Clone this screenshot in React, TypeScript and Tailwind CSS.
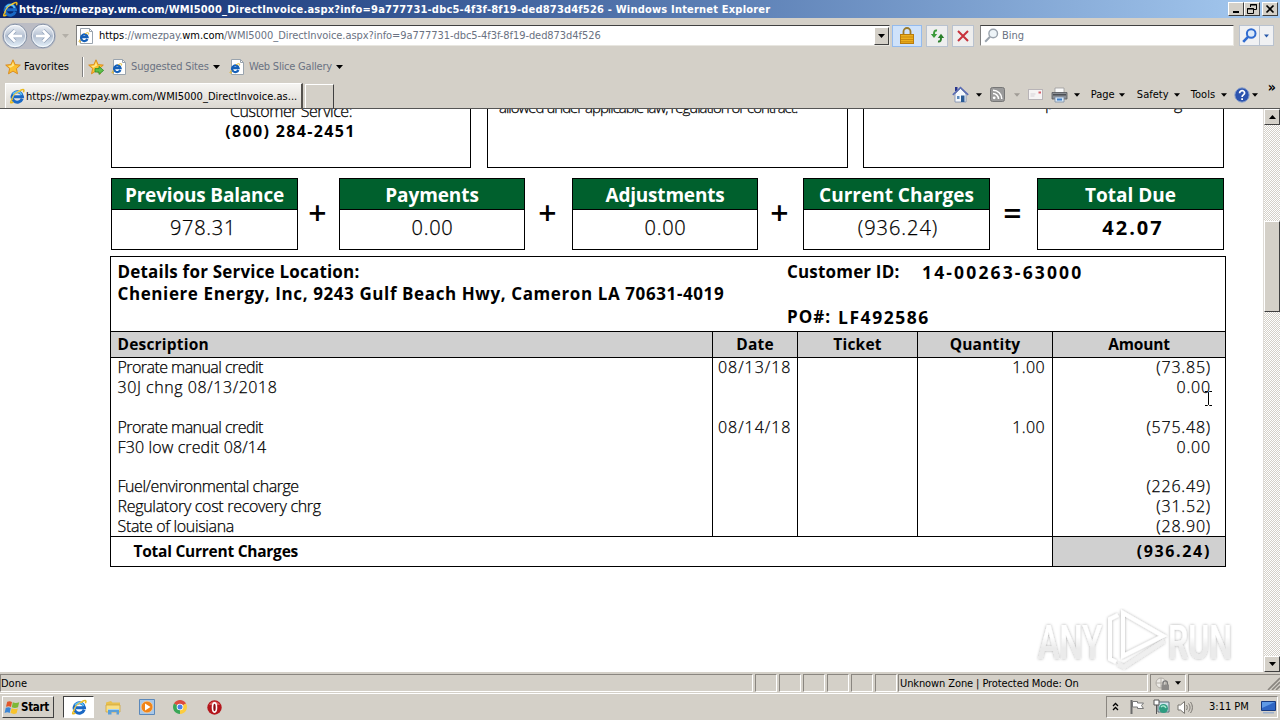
import { ReactNode } from "react";

const URL_HOST = "wm.com";

interface LineItem {
  description: string;
  tracking?: string;
  date?: string;
  quantity?: string;
  amount?: string;
}

const lineItems: LineItem[] = [
  { description: "Prorate manual credit", tracking: "tracking-[-0.55px]", date: "08/13/18", quantity: "1.00", amount: "(73.85)" },
  { description: "30J chng 08/13/2018", tracking: "tracking-[0.56px]", amount: "0.00" },
  { description: "" },
  { description: "Prorate manual credit", tracking: "tracking-[-0.55px]", date: "08/14/18", quantity: "1.00", amount: "(575.48)" },
  { description: "F30 low credit 08/14", tracking: "tracking-[0.12px]", amount: "0.00" },
  { description: "" },
  { description: "Fuel/environmental charge", tracking: "tracking-[-0.45px]", amount: "(226.49)" },
  { description: "Regulatory cost recovery chrg", tracking: "tracking-[-0.3px]", amount: "(31.52)" },
  { description: "State of louisiana", tracking: "tracking-[-0.35px]", amount: "(28.90)" },
];

const quickLaunch = [<ExplorerIcon />, <MediaIcon />, <ChromeIcon />, <OperaIcon />];

/* ---------- Icons ---------- */

function IeIcon({ size = 16 }: { size?: number }) {
  return (
    <svg width={size} height={size} viewBox="0 0 16 16" fill="none" className="shrink-0">
      <path d="M13.2 10.8A5.2 5.2 0 1 1 13.5 8.7H5" stroke="#1a68c4" strokeWidth="3" />
      <path d="M12.6 7A4.6 4.6 0 0 0 4 6.4" stroke="#5cc0f6" strokeWidth="1.6" />
      <path d="M3.6 10.6C.6 14.6 1.2 15.8 4.4 14M9.8 3.4C13.8.6 16 .8 14.4 4.2" stroke="#e9b91e" strokeWidth="1.5" />
      <path d="M2.6 11.4C4 7.4 7.4 4.2 11.6 2.6" stroke="#f2cf45" strokeWidth="1.1" />
    </svg>
  );
}

function IePageIcon() {
  return (
    <svg width="16" height="16" viewBox="0 0 16 16" fill="none" className="shrink-0">
      <path d="M2.5.5h9l3 3v12h-12z" fill="#fff" stroke="#9aa4ae" />
      <path d="M11.5.5v3h3" stroke="#9aa4ae" />
      <path d="M9.4 11A3.3 3.3 0 1 1 9.6 9.2H4.2" stroke="#1560b8" strokeWidth="2.2" />
      <path d="M2.4 11.2C.2 14 .8 14.8 3 13.4M7 5.8c3-1.8 4.4-1.4 3.2.8" stroke="#e0b42a" />
    </svg>
  );
}

function Star({ arrow }: { arrow?: boolean }) {
  return (
    <svg width="16" height="16" viewBox="0 0 16 16" className="shrink-0">
      <path d="M8 .8l2.1 4.8 5.2.5-3.9 3.5 1.1 5.2L8 12.1l-4.5 2.7 1.1-5.2L.7 6.1l5.2-.5z" fill="#fbc02f" stroke="#d98616" strokeWidth=".9" />
      <path d="M8 3l1.2 3.4-3.7 2.3L3 7l3.5-.6z" fill="#ffe68a" />
      {arrow && <path d="M7 9.6h4V7.4l4.6 4-4.6 4v-2.4H7z" fill="#5fc04a" stroke="#2b8a26" strokeWidth=".8" />}
    </svg>
  );
}

function Caret({ className = "text-black" }: { className?: string }) {
  return (
    <svg width="7" height="4" viewBox="0 0 7 4" className={"shrink-0 " + className}>
      <path d="M0 0h7L3.5 4z" fill="currentColor" />
    </svg>
  );
}

function NavCircle({ back }: { back?: boolean }) {
  const arrow = back ? "M20 13H8M13 7.5L7.5 13l5.5 5.5" : "M6 13h12M13 7.5l5.5 5.5-5.5 5.5";
  return (
    <svg width="26" height="26" viewBox="0 0 26 26" fill="none" className="shrink-0">
      <defs>
        <linearGradient id="nav" x1="0" y1="0" x2="0" y2="1">
          <stop offset="0" stopColor="#f3f6fa" />
          <stop offset=".5" stopColor="#b4c0d2" />
          <stop offset="1" stopColor="#e6f2fb" />
        </linearGradient>
      </defs>
      <circle cx="13" cy="13" r="11.8" fill="url(#nav)" stroke="#8793a6" />
      <circle cx="13" cy="13" r="10.6" stroke="#fff" strokeOpacity=".7" />
      <path d={arrow} stroke="#8fa0b8" strokeWidth="4.2" />
      <path d={arrow} stroke="#fff" strokeWidth="2.8" />
    </svg>
  );
}

function LockIcon() {
  return (
    <svg width="14" height="17" viewBox="0 0 14 17" fill="none">
      <path d="M3.5 8V4.5a3.5 3.5 0 0 1 7 0V8" stroke="#9a7a2c" strokeWidth="1.8" />
      <rect x=".5" y="7.5" width="13" height="9" fill="#eeb01c" stroke="#b97c0c" />
      <path d="M1 10h12M1 12.5h12M1 14.8h12" stroke="#c98a10" />
    </svg>
  );
}

function RefreshIcon() {
  return (
    <svg width="15" height="14" viewBox="0 0 15 14" fill="none">
      <path d="M7 1.5C4.5 1.2 4 2.5 4 5.5" stroke="#3c9a3a" strokeWidth="2" />
      <path d="M.8 5H7.2L4 9z" fill="#3c9a3a" />
      <path d="M8 12.5c2.5.3 3-1 3-4" stroke="#2a7f2a" strokeWidth="2" />
      <path d="M7.8 9h6.4L11 4.8z" fill="#2a7f2a" />
    </svg>
  );
}

function SearchGlyph({ color, bold }: { color: string; bold?: boolean }) {
  return (
    <svg width="15" height="15" viewBox="0 0 15 15" fill="none" className="shrink-0">
      <circle cx="9.2" cy="5.5" r="4.3" fill={bold ? "#dceafa" : "#eef4f8"} stroke={color} strokeWidth={bold ? 2 : 1.4} />
      <path d="M6 8.8L1.2 13.8" stroke={color} strokeWidth={bold ? 2.6 : 2} />
    </svg>
  );
}

function HomeIcon() {
  return (
    <svg width="17" height="17" viewBox="0 0 17 17">
      <path d="M3 1h2.5v4H3z" fill="#28348c" />
      <path d="M3 8l5.5-5.5L14 8v8H3z" fill="#f4f7fb" stroke="#7a8cae" strokeWidth=".8" />
      <path d="M.8 8.8L8.5 1.5l7.7 7.3" fill="none" stroke="#5a6cb4" strokeWidth="1.6" />
      <path d="M5 10h2.5v3H5z" fill="#5a88bc" />
      <path d="M9 9.5h3.5V16H9z" fill="#2a5a94" />
    </svg>
  );
}

function RssIcon() {
  return (
    <svg width="15" height="15" viewBox="0 0 15 15" fill="none">
      <rect x=".5" y=".5" width="14" height="14" rx="2" fill="#9a9a9a" stroke="#777" />
      <circle cx="4.2" cy="10.8" r="1.4" fill="#fff" />
      <path d="M3 6.5a5.5 5.5 0 0 1 5.5 5.5M3 3.2A8.8 8.8 0 0 1 11.8 12" stroke="#fff" strokeWidth="1.5" />
    </svg>
  );
}

function MailIcon() {
  return (
    <svg width="15" height="11" viewBox="0 0 15 11" fill="none">
      <rect x=".5" y=".5" width="14" height="10" fill="#f6f4f4" stroke="#b8b4b7" />
      <path d="M10.5 2.5H13v2h-2.5z" fill="#d8606a" />
      <path d="M2.5 5h5M2.5 7h4" stroke="#d5d1d6" />
    </svg>
  );
}

function PrinterIcon() {
  return (
    <svg width="17" height="16" viewBox="0 0 17 16">
      <path d="M4 1h9v5H4z" fill="#fafafa" stroke="#9a9a9a" strokeWidth=".8" />
      <path d="M1 5.5h15V12H1z" fill="#8b8f94" stroke="#55585c" strokeWidth=".8" />
      <path d="M2 7h13v1.5H2z" fill="#4c4f54" />
      <path d="M4 10h9v5H4z" fill="#d5e6f6" stroke="#7d8ea2" strokeWidth=".8" />
      <path d="M6 11.5h5v2H6z" fill="#3f7fc8" />
    </svg>
  );
}

function HelpIcon() {
  return (
    <svg width="16" height="16" viewBox="0 0 16 16" fill="none">
      <circle cx="8" cy="8" r="7.2" fill="#2c53ae" stroke="#8fa4cc" />
      <path d="M5.6 6.2C5.6 2.8 10.6 3 10.6 6c0 2-2.5 1.9-2.5 4" stroke="#fff" strokeWidth="1.7" />
      <path d="M7.2 11.3H9V13H7.2z" fill="#fff" />
    </svg>
  );
}

function WindowsFlag() {
  return (
    <svg width="16" height="15" viewBox="0 0 16 15" className="shrink-0">
      <path d="M3.2 1.8C5 .8 6.5 1 8 2L7 7C5.4 6 4 6 2 6.8z" fill="#e2572b" />
      <path d="M8.8 2.3c2 1 4 .9 6.4 0L14 7.2c-2 .9-4.2.9-6.2 0z" fill="#7db837" />
      <path d="M1.8 7.8c2-.8 3.4-.7 5 .2l-1.1 5C4.2 12 2.5 12 .6 12.9z" fill="#3b86d6" />
      <path d="M7.6 8.3c2 .9 4 .9 6.2.1l-1.2 4.9c-2 .9-4 .8-6.1-.2z" fill="#f8c32c" />
    </svg>
  );
}

function ExplorerIcon() {
  return (
    <svg width="16" height="15" viewBox="0 0 16 15">
      <path d="M1 2.5L6 1l1.5 1.5H15V6H1z" fill="#e8c04e" />
      <path d="M1 5h14v7H1z" fill="#f8df85" stroke="#cfa53e" strokeWidth=".8" />
      <path d="M3 9h11v5.5h-2.5V12h-5v2.5H3z" fill="#5a9fd8" />
      <path d="M3 9h11v1H3z" fill="#a8d2f0" />
    </svg>
  );
}

function MediaIcon() {
  return (
    <svg width="16" height="16" viewBox="0 0 16 16">
      <path d="M.5.5h15v15H.5z" fill="#a9c8e8" stroke="#5b88ba" />
      <circle cx="8" cy="8" r="5.8" fill="#f08418" stroke="#fbc890" strokeWidth=".7" />
      <path d="M6 4.5L11.5 8 6 11.5z" fill="#fff" />
    </svg>
  );
}

function ChromeIcon() {
  return (
    <svg width="14" height="14" viewBox="0 0 14 14">
      <path d="M7 7L.94 3.5A7 7 0 0 1 13.06 3.5z" fill="#dd4b3e" />
      <path d="M7 7L13.06 3.5A7 7 0 0 1 7 14z" fill="#fccd3f" />
      <path d="M7 7v7A7 7 0 0 1 .94 3.5z" fill="#3aa757" />
      <circle cx="7" cy="7" r="3.3" fill="#fff" />
      <circle cx="7" cy="7" r="2.5" fill="#4a80e8" />
    </svg>
  );
}

function OperaIcon() {
  return (
    <svg width="15" height="15" viewBox="0 0 15 15">
      <circle cx="7.5" cy="7.5" r="7.2" fill="#b4161c" />
      <path d="M2 5a6 6 0 0 1 11 0z" fill="#dc5a58" />
      <ellipse cx="7.5" cy="7.5" rx="2" ry="4.6" fill="#8c0c12" stroke="#fff" strokeWidth="1.6" />
    </svg>
  );
}

function Watermark() {
  return (
    <svg width="200" height="64" viewBox="0 0 200 64" fill="none">
      <defs>
        <linearGradient id="wm" x1="0" y1="0" x2="0" y2="1">
          <stop offset=".4" stopColor="#fff" />
          <stop offset=".6" stopColor="#ebebeb" />
        </linearGradient>
        <filter id="soft" x="-10%" y="-10%" width="120%" height="130%">
          <feDropShadow dx="0" dy="0" stdDeviation="1.5" floodColor="#000" floodOpacity=".34" />
        </filter>
      </defs>
      <g filter="url(#soft)" fill="url(#wm)" className="font-['Roboto','Liberation_Sans',sans-serif] text-[48px] font-medium">
        <text x="2" y="51" textLength="64" lengthAdjust="spacingAndGlyphs">ANY</text>
        <text x="132" y="51" textLength="64" lengthAdjust="spacingAndGlyphs">RUN</text>
      </g>
      <g filter="url(#soft)" stroke="#fff" strokeWidth="4">
        <path d="M82 7L74 11v40l6 3" />
        <path d="M87 5v43L127 28z" />
        <path d="M128 33L88 59l-6-3" stroke="#efefef" />
      </g>
    </svg>
  );
}

/* ---------- Browser window ---------- */

function WindowButton({ children }: { children: ReactNode }) {
  return (
    <button className="w-4 h-[14px] bg-[#d4d0c8] border border-t-white border-l-white border-r-[#404040] border-b-[#404040] flex items-center justify-center">
      {children}
    </button>
  );
}

function TitleBar() {
  return (
    <div className="h-[18px] flex items-center justify-between px-0.5 bg-linear-to-r from-[#0a246a] to-[#a6caf0]">
      <div className="flex items-center gap-px">
        <IeIcon />
        <span className="text-white font-bold tracking-[0.2px] pt-px">
          https://wmezpay.wm.com/WMI5000_DirectInvoice.aspx?info=9a777731-dbc5-4f3f-8f19-ded873d4f526 - Windows Internet Explorer
        </span>
      </div>
      <div className="flex">
        <WindowButton>
          <svg width="10" height="10"><path d="M2 7h6v2H2z" /></svg>
        </WindowButton>
        <WindowButton>
          <svg width="10" height="10" fill="none" stroke="#000">
            <path d="M3.5 3V.5h6v5H7M3 1h7M.5 4.5h6v5h-6zM0 5h7" />
          </svg>
        </WindowButton>
        <span className="w-[2px]" />
        <WindowButton>
          <svg width="10" height="10" fill="none" stroke="#000" strokeWidth="1.7"><path d="M1.5 1.5l7 7M8.5 1.5l-7 7" /></svg>
        </WindowButton>
      </div>
    </div>
  );
}

function NavBar() {
  return (
    <div className="h-[34px] flex items-center pl-0.5 pt-px">
      <div className="flex gap-[2px] rounded-full bg-[#bbbcc4]">
        <NavCircle back />
        <NavCircle />
      </div>
      <Caret className="text-[#b3afa8] ml-[6px]" />
      <div className="ml-[7px] w-[814px] h-[21px] bg-white border border-[#808080] border-r-[#e8e6e0] border-b-[#e8e6e0] border-t-[#404040] flex items-center pl-px">
        <IePageIcon />
        <span className="ml-[5px] pt-px flex-1 text-gray-500 whitespace-pre tracking-[-0.06px]">
          <span className="text-black">https</span>://wmezpay.<span className="text-black">{URL_HOST}</span>
          /WMI5000_DirectInvoice.aspx?info=9a777731-dbc5-4f3f-8f19-ded873d4f526
        </span>
        <button className="w-[15px] h-[18px] bg-[#d4d0c8] border border-t-white border-l-white border-r-[#404040] border-b-[#404040] flex items-center justify-center">
          <Caret />
        </button>
      </div>
      <button className="ml-[2px] w-[30px] h-[22px] bg-[#cfe2fa] border border-[#94bbee] flex items-center justify-center">
        <LockIcon />
      </button>
      <button className="ml-1 w-[22px] h-[22px] bg-[#eeeeee] border border-[#b9c2cf] flex items-center justify-center">
        <RefreshIcon />
      </button>
      <button className="ml-1 w-[22px] h-[22px] bg-[#eeeeee] border border-[#b9c2cf] flex items-center justify-center">
        <svg width="12" height="12" fill="none" stroke="#c8323c" strokeWidth="2"><path d="M1 1l10 10M11 1L1 11" /></svg>
      </button>
      <div className="ml-[6px] w-[254px] h-[21px] bg-white border border-[#808080] border-t-[#404040] border-r-[#e8e6e0] border-b-[#e8e6e0] flex items-center pl-[3px] gap-[3px]">
        <SearchGlyph color="#9aa3ad" />
        <span className="text-gray-500 pt-px">Bing</span>
      </div>
      <div className="ml-[5px] w-[35px] h-[21px] bg-[#f0f1f3] border border-[#b9c2cf] flex items-center">
        <span className="w-5 h-full flex items-center justify-center border-r border-[#b9c2cf]">
          <SearchGlyph color="#2f6bd0" bold />
        </span>
        <span className="flex-1 flex justify-center"><Caret className="text-[#2758a8] w-[5px]" /></span>
      </div>
    </div>
  );
}

function FavoritesBar() {
  return (
    <div className="h-[30px] flex items-center pl-[5px]">
      <Star />
      <span className="ml-[3px] w-[58px] tracking-[0.05px]">Favorites</span>
      <span className="w-[2px] h-5 border-l border-[#808080] bg-white mr-[4px]" />
      <Star arrow />
      <span className="ml-[7px]"><IePageIcon /></span>
      <span className="ml-[4px] w-[82px] text-gray-500 tracking-[-0.15px]">Suggested Sites</span>
      <Caret />
      <span className="ml-[9px]"><IePageIcon /></span>
      <span className="ml-[4px] w-[87px] text-gray-500 tracking-[-0.2px]">Web Slice Gallery</span>
      <Caret />
    </div>
  );
}

function TabBar() {
  return (
    <div className="h-[27px] flex items-end border-b border-[#555]">
      <div className="ml-[5px] w-[298px] h-[25px] border-t border-l border-white border-r-2 border-r-[#55524e] bg-linear-to-b from-[#f6f5f3] to-[#dcd8d1] flex items-center pl-[3px] gap-px">
        <IeIcon />
        <span className="tracking-[0.03px] pt-px">https://wmezpay.wm.com/WMI5000_DirectInvoice.as...</span>
      </div>
      <div className="ml-[2px] w-[29px] h-[24px] border-t border-l border-white border-r border-r-[#404040]" />
      <div className="ml-auto flex items-center h-[27px] pr-1">
        <HomeIcon />
        <span className="ml-[7px]"><Caret className="w-[6px]" /></span>
        <span className="ml-[8px]"><RssIcon /></span>
        <span className="ml-[9px]"><Caret className="text-[#a09c96] w-[6px]" /></span>
        <span className="ml-[8px]"><MailIcon /></span>
        <span className="ml-2"><PrinterIcon /></span>
        <span className="ml-[6px]"><Caret className="w-[6px]" /></span>
        <span className="ml-[11px] w-[28px] tracking-[-0.1px]">Page</span>
        <Caret className="w-[6px]" />
        <span className="ml-[12px] w-[37px]">Safety</span>
        <Caret className="w-[6px]" />
        <span className="ml-[11px] w-[30px]">Tools</span>
        <Caret className="w-[6px]" />
        <span className="ml-[7px]"><HelpIcon /></span>
        <Caret className="w-[6px] ml-[2px]" />
        <span className="ml-[10px] mb-4 text-[14px] leading-3 font-bold">»</span>
      </div>
    </div>
  );
}

function ScrollBar() {
  const button =
    "w-4 h-4 bg-[#d4d0c8] border border-t-white border-l-white border-r-[#404040] border-b-[#404040] flex items-center justify-center";
  return (
    <div className="w-[17px] h-full pr-px flex flex-col border-l border-[#dedbd6] bg-[repeating-conic-gradient(#fff_0_25%,#d4d0c8_0_50%)] bg-size-[2px_2px]">
      <div className={button}>
        <Caret className="rotate-180" />
      </div>
      <div className="mt-[96px] w-4 h-[91px] bg-[#d4d0c8] border border-t-white border-l-white border-r-[#404040] border-b-[#404040]" />
      <div className={button + " mt-auto"}>
        <Caret />
      </div>
    </div>
  );
}

/* ---------- Invoice ---------- */

// Between light and regular: the light face with a hairline stroke
const light = "font-light [-webkit-text-stroke:0.25px_#000]";

interface SummaryBoxProps {
  title: string;
  value: string;
  className: string;
  titleClass?: string;
  valueClass?: string;
}

function SummaryBox({ title, value, className, titleClass = "", valueClass = "" }: SummaryBoxProps) {
  return (
    <div className={"h-[72px] border border-black text-center " + className}>
      <div className={"h-[31px] leading-[33px] bg-[#00602d] border-b border-black text-white text-[19px] font-bold " + titleClass}>
        {title}
      </div>
      <div className={"leading-[36px] text-[20px] " + valueClass}>{value}</div>
    </div>
  );
}

function Operator({ children, className }: { children: string; className: string }) {
  return (
    <span className={"text-center text-[32px] leading-[70px] font-semibold pr-[2px] " + className}>{children}</span>
  );
}

function Invoice() {
  const cell = "border-r border-black";
  return (
    <div className="flex-1 h-full overflow-hidden bg-white pl-[110px] font-['Open_Sans','Noto_Sans',sans-serif] text-[16px] text-black">
      <div className="ml-px h-[59px] flex gap-4">
        <div className="w-[360px] border border-t-0 border-black text-center">
          <div className={"-mt-[8px] leading-5 tracking-[-0.45px] " + light}>Customer Service:</div>
          <div className="leading-5 font-bold tracking-[1.35px] pr-px">(800) 284-2451</div>
        </div>
        <div className="w-[361px] border border-t-0 border-black pl-[11px]">
          <div className={"-mt-[12px] leading-5 text-[15px] tracking-[-1px] whitespace-nowrap " + light}>
            allowed under applicable law, regulation or contract.
          </div>
        </div>
        <div className="w-[361px] -ml-px border border-t-0 border-black">
          <div className={"-mt-[16px] leading-5 flex pl-[181px] " + light}>
            <span className="w-[129px]">p</span>
            <span>g</span>
          </div>
        </div>
      </div>

      <div className="mt-[10px] ml-px flex">
        <SummaryBox title="Previous Balance" value="978.31" className="w-[187px]" titleClass="tracking-[-0.18px]" valueClass={light + " tracking-[0.7px] pr-[3px]"} />
        <Operator className="w-[41px]">+</Operator>
        <SummaryBox title="Payments" value="0.00" className="w-[186px]" titleClass="tracking-[-0.1px]" valueClass={light + " tracking-[0.7px] pl-px"} />
        <Operator className="w-[47px]">+</Operator>
        <SummaryBox title="Adjustments" value="0.00" className="w-[186px]" titleClass="tracking-[-0.2px]" valueClass={light + " tracking-[0.7px] pl-px"} />
        <Operator className="w-[45px]">+</Operator>
        <SummaryBox title="Current Charges" value="(936.24)" className="w-[187px]" valueClass={light + " tracking-[0.95px] pl-[3px]"} />
        <Operator className="w-[47px]">=</Operator>
        <SummaryBox title="Total Due" value="42.07" className="w-[187px]" valueClass="font-bold tracking-[2px] pl-[5px]" />
      </div>

      <div className="mt-[6px] w-[1116px] border border-black">
        <div className="h-[74px] pl-[7px] flex text-[17px] leading-[22px] font-bold pt-[4px]">
          <div className="w-[669px] -ml-[0.5px] mr-[0.5px]">
            <div className="tracking-[0.2px]">Details for Service Location:</div>
            <div className="tracking-[0.6px]">Cheniere Energy, Inc, 9243 Gulf Beach Hwy, Cameron LA 70631-4019</div>
          </div>
          <div>
            <div className="flex">
              <span className="w-[135px] tracking-[0.18px]">Customer ID:</span>
              <span className="text-[17.5px] tracking-[2.15px]">14-00263-63000</span>
            </div>
            <div className="mt-[23px] flex">
              <span className="w-[51px] tracking-[1px]">PO#:</span>
              <span className="text-[17.5px] tracking-[1.55px]">LF492586</span>
            </div>
          </div>
        </div>

        <div className="h-[27px] leading-[25px] flex border-y border-black bg-[#d0d0d0] text-[15.5px] font-bold text-center tracking-[0.2px]">
          <div className={"w-[602px] pl-[6.5px] text-left " + cell}>Description</div>
          <div className={"w-[85px] " + cell}>Date</div>
          <div className={"w-[120px] " + cell}>Ticket</div>
          <div className={"w-[135px] " + cell}>Quantity</div>
          <div className="w-[172px] tracking-[-0.15px]">Amount</div>
        </div>

        <div className={"h-[178px] pt-[0.4px] flex leading-[19.8px] " + light}>
          <div className={"w-[602px] pl-[6.5px] " + cell}>
            {lineItems.map((item, i) => (
              <div key={i} className={"h-[19.8px] " + (item.tracking ?? "")}>{item.description}</div>
            ))}
          </div>
          <div className={"w-[85px] pl-[5px] tracking-[0.95px] " + cell}>
            {lineItems.map((item, i) => (
              <div key={i} className="h-[19.8px]">{item.date}</div>
            ))}
          </div>
          <div className={"w-[120px] " + cell} />
          <div className={"w-[135px] pr-[7px] text-right tracking-[0.4px] " + cell}>
            {lineItems.map((item, i) => (
              <div key={i} className="h-[19.8px]">{item.quantity}</div>
            ))}
          </div>
          <div className="w-[172px] pr-[14px] text-right tracking-[0.8px]">
            {lineItems.map((item, i) => (
              <div key={i} className="h-[19.8px]">{item.amount}</div>
            ))}
          </div>
        </div>

        <div className="h-[30px] leading-[29px] flex border-t border-black font-bold">
          <div className="w-[942px] pl-[22.5px] border-r border-black text-[15.5px] tracking-[-0.25px]">Total Current Charges</div>
          <div className="w-[172px] pr-[14px] bg-[#d0d0d0] text-right tracking-[1.65px]">(936.24)</div>
        </div>
      </div>
    </div>
  );
}

/* ---------- Status bar and taskbar ---------- */

const panel = "h-[18px] border border-[#8a8680] border-r-white border-b-white flex items-center";

function StatusBar() {
  return (
    <div className="h-[21px] flex items-end pb-px gap-[2px]">
      <div className={panel + " w-[753px] pt-px"}>Done</div>
      {[0, 1, 2, 3, 4, 5].map((i) => (
        <div key={i} className={panel + " w-[22px]"} />
      ))}
      <div className={panel + " w-[250px] -ml-px pl-px pt-px tracking-[-0.1px]"}>Unknown Zone | Protected Mode: On</div>
      <div className={panel + " w-[36px] pl-[3px] gap-1"}>
        <svg width="17" height="15" viewBox="0 0 17 15" fill="none">
          <circle cx="7" cy="7" r="5" fill="#eceae6" stroke="#b1ada6" />
          <path d="M2 7h10M7 2v10" stroke="#b1ada6" />
          <path d="M9 9V7a2.2 2.2 0 0 1 4.4 0v2" stroke="#777" strokeWidth="1.3" />
          <path d="M7.5 8.5H15V14H7.5z" fill="#8c8a88" />
        </svg>
        <Caret className="w-[6px]" />
      </div>
      <div className={panel + " flex-1 justify-end border-r-0"}>
        <svg width="13" height="13" stroke="#8a8680" fill="none">
          <path d="M1 13L13 1M5 13l8-8M9 13l4-4" strokeWidth="1.6" />
        </svg>
      </div>
    </div>
  );
}

function Taskbar() {
  return (
    <div className="h-[27px] border-t border-white flex items-center px-[2px]">
      <button className="w-[52px] h-[22px] bg-[#d4d0c8] border border-t-white border-l-white border-r-[#404040] border-b-[#404040] flex items-center pl-px font-bold">
        <WindowsFlag />
        <span className="ml-px tracking-[-0.3px] text-[11.5px]">Start</span>
      </button>
      <button className="ml-[9px] mr-[10px] w-[31px] h-[22px] border border-t-[#404040] border-l-[#404040] border-white bg-white flex items-center justify-center">
        <IeIcon />
      </button>
      {quickLaunch.map((icon, i) => (
        <span key={i} className="w-[34px] flex items-center pl-px">{icon}</span>
      ))}
      <div className="ml-auto w-[172px] h-[22px] border border-[#8a8680] border-r-white border-b-white flex items-center pl-[5px]">
        <svg width="7" height="10" fill="none" stroke="#000" strokeWidth="1.3"><path d="M1 4l2.5-2.5L6 4M1 8l2.5-2.5L6 8" /></svg>
        <svg width="16" height="16" viewBox="0 0 16 16" fill="none" className="ml-[10px]">
          <path d="M2.5 1v14" stroke="#6c6c6c" strokeWidth="2" />
          <path d="M3.5 2.5h5V4h6l-2 2.5 2 3h-6V8h-5z" fill="#fff" stroke="#777" />
        </svg>
        <svg width="17" height="16" viewBox="0 0 17 16" fill="none" className="ml-[8px]">
          <path d="M5 3h11v10H5z" fill="#cfe4ec" stroke="#5b6d78" />
          <circle cx="10.5" cy="9.5" r="4.5" fill="#2f9c80" />
          <path d="M8 8c2-2 4-1 5 1" stroke="#a9e6cf" strokeWidth="1.4" />
          <path d="M1 1h5v5H1z" fill="#fff" stroke="#555" />
          <path d="M3.5 6v9" stroke="#555" />
        </svg>
        <svg width="17" height="15" viewBox="0 0 17 15" fill="none" stroke="#77746f" className="ml-[7px]">
          <path d="M1 5h2.5l4-3.5v12l-4-3.5H1z" fill="#fff" />
          <path d="M9.5 5c1 1.5 1 3.5 0 5M11.5 3.5c2 2.5 2 5.500 0 8M13.500 2c2.500 3.500 2.500 7.500 0 11" />
        </svg>
        <span className="ml-[15px]">3:11 PM</span>
        <svg width="15" height="13" viewBox="0 0 15 13" className="ml-auto mr-px">
          <path d="M.5.5h14v9H.5z" fill="#2f66c4" stroke="#173a80" />
          <path d="M1 1h13L1 7z" fill="#5f9ae6" />
          <path d="M2 11h11v1.5H2z" fill="#9cb0cc" />
        </svg>
      </div>
    </div>
  );
}

function App() {
  return (
    <div className="relative w-[1280px] h-[720px] overflow-hidden flex flex-col bg-[#d4d0c8] text-black font-['DejaVu_Sans_Condensed','DejaVu_Sans',sans-serif] text-[11px] leading-[14px] whitespace-nowrap">
      <TitleBar />
      <NavBar />
      <FavoritesBar />
      <TabBar />
      <div className="h-[563px] flex">
        <Invoice />
        <ScrollBar />
      </div>
      <StatusBar />
      <Taskbar />

      <div className="absolute left-[1036px] top-[608px]">
        <Watermark />
      </div>
      {/* Text cursor */}
      <svg width="9" height="15" viewBox="0 0 9 15" fill="none" stroke="#000" className="absolute left-[1204px] top-[391px]">
        <path d="M1 .5h2.5l1 1 1-1H8M4.5 1.5v12M1 14.5h2.5l1-1 1 1H8" />
      </svg>
    </div>
  );
}

export default App;
